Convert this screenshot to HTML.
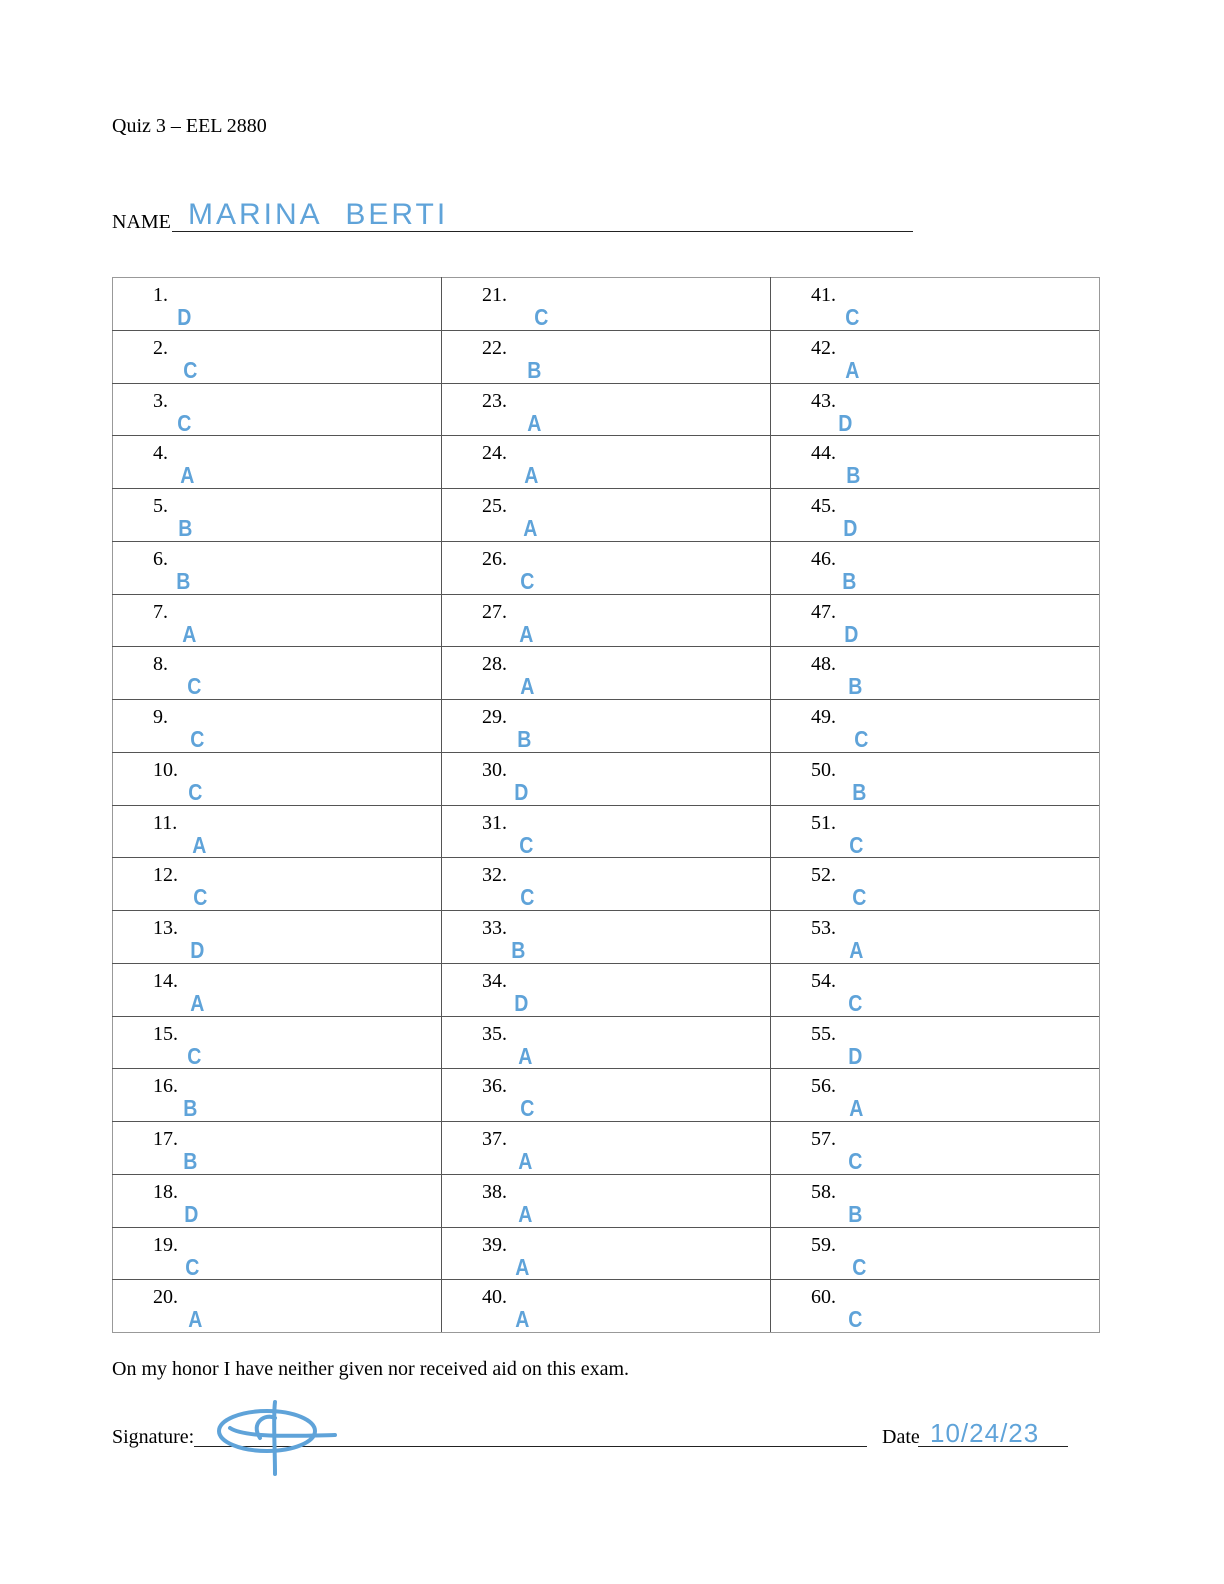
<!DOCTYPE html>
<html><head><meta charset="utf-8"><style>
html,body{margin:0;padding:0}
body{background:#fff;width:1224px;height:1584px;position:relative;overflow:hidden;font-family:"Liberation Serif",serif;color:#000}
.t{position:absolute;font-size:20px;line-height:22px;white-space:nowrap}
.h{position:absolute;color:#5fa3d9;font-family:"Liberation Sans",sans-serif;font-size:23px;line-height:24px;font-weight:bold;transform:scaleX(0.85)}
.ul{position:absolute;border-bottom:1px solid #222;height:0}
</style></head><body>
<div class="t" style="left:112px;top:115px">Quiz 3 – EEL 2880</div>
<div class="t" style="left:112px;top:211px">NAME</div>
<div class="ul" style="left:172px;top:231px;width:741px"></div>
<div class="h" style="left:188px;top:199px;font-size:30px;line-height:32px;font-weight:normal;letter-spacing:3px;transform-origin:left;transform:scaleX(1.0)">MARINA&nbsp; BERTI</div>
<div id="tbl"></div>
<div class="t" style="left:112px;top:1358px">On my honor I have neither given nor received aid on this exam.</div>
<div class="t" style="left:112px;top:1426px">Signature:</div>
<div class="ul" style="left:194px;top:1446px;width:673px"></div>
<div class="t" style="left:882px;top:1426px">Date</div>
<div class="ul" style="left:918px;top:1446px;width:150px"></div>
<div class="h" style="left:930px;top:1421px;font-size:26px;font-weight:normal;transform:none;letter-spacing:1px">10/24/23</div>
<svg style="position:absolute;left:215px;top:1398px" width="125" height="80" viewBox="0 0 125 80" fill="none" stroke="#5fa3d9" stroke-width="4" stroke-linecap="round">
<ellipse cx="52" cy="33" rx="48" ry="20"/>
<path d="M60 4 C58 20 60 50 60 76"/>
<path d="M15 30 C30 40 80 38 120 37"/>
<path d="M60 20 C50 15 35 25 45 40"/>
</svg>
<script>
const ans=[
["D","C","C","A","B","B","A","C","C","C","A","C","D","A","C","B","B","D","C","A"],
["C","B","A","A","A","C","A","A","B","D","C","C","B","D","A","C","A","A","A","A"],
["C","A","D","B","D","B","D","B","C","B","C","C","A","C","D","A","C","B","C","C"]];
const xs=[[180,186,180,183,181,179,185,190,193,191,195,196,193,193,190,186,186,187,188,191],
[537,530,530,527,526,523,522,523,520,517,522,523,514,517,521,523,521,521,518,518],
[848,848,841,849,846,845,847,851,857,855,852,855,852,851,851,852,851,851,855,851]];
const L=[112,441,770,1099],T=277,RH=52.75;
let h='';
h+=`<div style="position:absolute;left:112px;top:277px;width:986px;height:1054px;border:1px solid #999"></div>`;
for(let i=1;i<3;i++)h+=`<div style="position:absolute;left:${L[i]}px;top:277px;width:1px;height:1055px;background:#555"></div>`;
for(let r=1;r<20;r++)h+=`<div style="position:absolute;left:112px;top:${Math.round(T+r*RH)}px;width:987px;height:1px;background:#555"></div>`;
for(let c=0;c<3;c++)for(let r=0;r<20;r++){
 const y=T+r*RH;
 h+=`<div class="t" style="left:${L[c]+41}px;top:${Math.round(y+7)}px">${c*20+r+1}.</div>`;
 h+=`<div class="h" style="left:${xs[c][r]-4}px;top:${Math.round(y+28)}px">${ans[c][r]}</div>`;
}
document.getElementById('tbl').innerHTML=h;
</script>
</body></html>
